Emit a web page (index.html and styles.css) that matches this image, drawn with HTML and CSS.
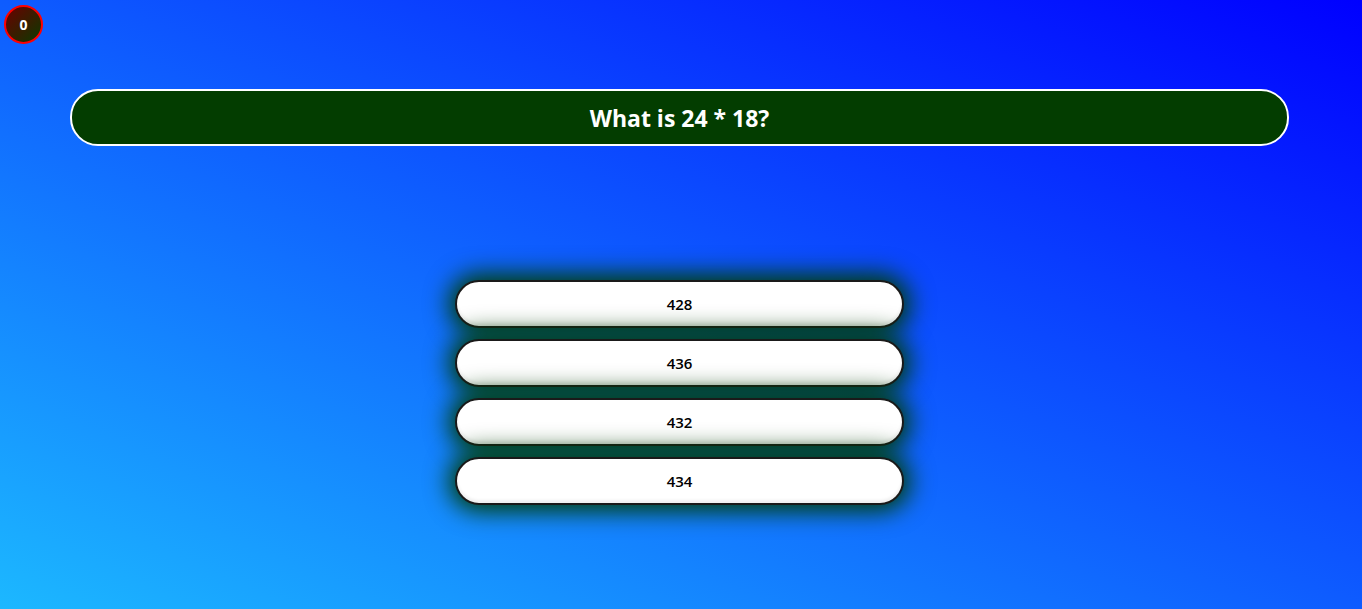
FILE: index.html
```html
<!DOCTYPE html>
<html>
<head>
<meta charset="utf-8">
<link rel="stylesheet" href="styles.css">
</head>
<body>
<div class="page">
  <div class="score">0</div>
  <div class="question">What is 24 * 18?</div>
  <div class="answers">
    <button class="answer">428</button>
    <button class="answer">436</button>
    <button class="answer">432</button>
    <button class="answer">434</button>
  </div>
</div>
</body>
</html>
```
FILE: styles.css
```css
html, body {
  margin: 0;
  padding: 0;
  height: 100%;
}
body {
  background: linear-gradient(to top right, #1cb8ff 0%, #0000ff 100%);
  font-family: "Open Sans", "DejaVu Sans", sans-serif;
  overflow: hidden;
}
.page {
  display: flex;
  flex-direction: column;
  padding: 5px 0 0 4px;
}
.score {
  width: 35px;
  height: 35px;
  border: 2px solid #ff0000;
  border-radius: 50%;
  background: linear-gradient(135deg, #6a0000, #0a3a00);
  color: #fff;
  font-weight: 700;
  font-size: 14px;
  display: flex;
  align-items: center;
  justify-content: center;
}
.question {
  margin: 45px 0 0 66px;
  width: 1215px;
  height: 53px;
  border: 2px solid #fff;
  border-radius: 28px;
  background: #033d00;
  color: #fff;
  font-weight: 700;
  font-size: 23px;
  display: flex;
  align-items: center;
  justify-content: center;
}
.answers {
  margin-top: 134px;
  margin-left: 451px;
  width: 449px;
  display: flex;
  flex-direction: column;
  gap: 11px;
}
.answer {
  height: 48px;
  border: 2px solid #1a1a1a;
  border-radius: 24px;
  background: #fff;
  font-family: "Open Sans", "DejaVu Sans", sans-serif;
  font-weight: 600;
  font-size: 15px;
  color: #000;
  box-shadow: 0 0 24px 6px #003d00, inset 0 -3px 3px rgba(0,0,0,0.06);
}
```
